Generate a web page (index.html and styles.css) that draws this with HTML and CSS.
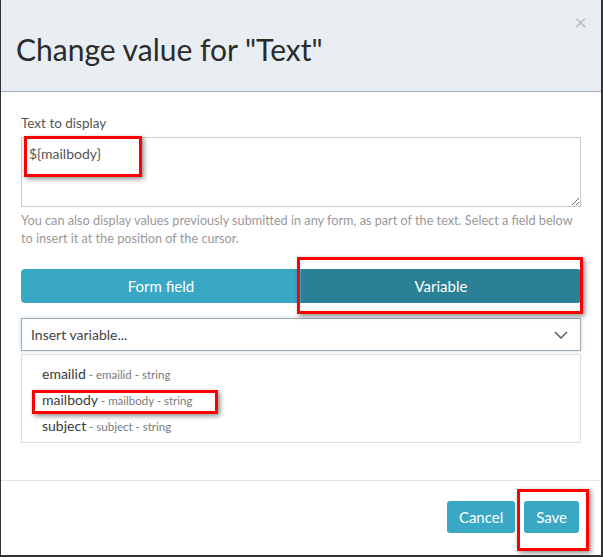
FILE: index.html
```html
<!DOCTYPE html>
<html lang="en">
<head>
<meta charset="utf-8">
<title>Change value</title>
<link rel="stylesheet" href="styles.css">
</head>
<body>
<div class="modal">
  <div class="modal-header">
    <h2 class="title">Change value for "Text"</h2>
    <span class="close">&times;</span>
  </div>
  <div class="modal-body">
    <label class="label">Text to display</label>
    <textarea class="textarea">${mailbody}</textarea>
    <p class="help">You can also display values previously submitted in any form, as part of the text. Select a field below to insert it at the position of the cursor.</p>
    <div class="tabs">
      <div class="tab">Form field</div>
      <div class="tab active">Variable</div>
    </div>
    <div class="select">
      <span>Insert variable...</span>
      <svg class="chevron" width="14" height="8" viewBox="0 0 14 8"><polyline points="1,1 7,7 13,1" fill="none" stroke="#555" stroke-width="1.4"/></svg>
    </div>
    <ul class="options">
      <li><span class="main">emailid</span><span class="sub"> - emailid - string</span></li>
      <li><span class="main">mailbody</span><span class="sub"> - mailbody - string</span></li>
      <li><span class="main">subject</span><span class="sub"> - subject - string</span></li>
    </ul>
  </div>
  <div class="modal-footer">
    <button class="btn">Cancel</button>
    <button class="btn">Save</button>
  </div>
  <span class="mark mark-1"></span>
  <span class="mark mark-2"></span>
  <span class="mark mark-3"></span>
  <span class="mark mark-4"></span>
</div>
</body>
</html>
```
FILE: styles.css
```css
html, body {
  margin: 0;
  padding: 0;
  background: #fff;
}
body {
  font-family: Lato, "Open Sans", sans-serif;
  color: #333;
}
.modal {
  position: relative;
  width: 600px;
  height: 555px;
  border-left: 1px solid #333;
  border-right: 2px solid #333;
  border-bottom: 2px solid #333;
  background: #fff;
  display: flex;
  flex-direction: column;
}
.modal-header {
  position: relative;
  height: 91px;
  background: #e9eef2;
  border-bottom: 1px solid #a3adb8;
  padding-left: 15px;
  box-sizing: content-box;
}
.title {
  margin: 0;
  padding-top: 31px;
  font-size: 30px;
  line-height: 36px;
  font-weight: 400;
  color: #2b2b2b;
}
.close {
  position: absolute;
  top: 8px;
  right: 14px;
  font-size: 22px;
  line-height: 28px;
  color: #bdbdbd;
}
.modal-body {
  flex: 1;
  padding: 22px 20px 0;
  display: flex;
  flex-direction: column;
}
.label {
  display: block;
  font-size: 13.5px;
  line-height: 18px;
  color: #555;
}
.textarea {
  display: block;
  margin-top: 5px;
  height: 70px;
  width: 100%;
  box-sizing: border-box;
  border: 1px solid #ccc;
  padding: 7px 7px 5px;
  font-family: Lato, sans-serif;
  font-size: 14px;
  line-height: 18px;
  color: #555;
  resize: vertical;
}
.help {
  margin: 4px 0 0;
  font-size: 12.7px;
  line-height: 18px;
  color: #999;
}
.tabs {
  display: flex;
  margin-top: 22px;
  height: 34px;
  border-radius: 4px;
  overflow: hidden;
}
.tab {
  flex: 1;
  display: flex;
  align-items: center;
  justify-content: center;
  background: #38a8c5;
  color: #fff;
  font-size: 15px;
}
.tab.active {
  background: #2a8196;
}
.select {
  margin-top: 15px;
  height: 33px;
  box-sizing: border-box;
  border: 1px solid #a8a8a8;
  box-shadow: 0 0 4px rgba(102, 175, 233, 0.45);
  display: flex;
  align-items: center;
  justify-content: space-between;
  padding: 0 12px 0 9px;
  font-size: 14px;
  color: #444;
}
.chevron {
  display: block;
}
.options {
  list-style: none;
  margin: 3px 0 0;
  padding: 5px 20px 0;
  height: 89px;
  box-sizing: border-box;
  border: 1px solid #ddd;
}
.options li {
  height: 26px;
  line-height: 26px;
}
.main {
  font-size: 14px;
  color: #3a3a3a;
}
.sub {
  font-size: 11.5px;
  color: #7a7a7a;
}
.modal-footer {
  height: 54px;
  border-top: 1px solid #e5e5e5;
  padding: 20px 22px 0 0;
  display: flex;
  justify-content: flex-end;
  align-items: flex-start;
  gap: 9px;
}
.btn {
  height: 32px;
  padding: 0 12px;
  border: 0;
  border-radius: 3px;
  background: #38a8c5;
  color: #fff;
  font-family: Lato, sans-serif;
  font-size: 15px;
}
.mark {
  position: absolute;
  border: 3px solid #ff0000;
  box-shadow: 2px 2px 5px rgba(0, 0, 0, 0.45);
  box-sizing: border-box;
}
.mark-1 { left: 23px; top: 136px; width: 118px; height: 41px; }
.mark-2 { left: 296px; top: 257px; width: 286px; height: 57px; }
.mark-3 { left: 31px; top: 390px; width: 186px; height: 24px; }
.mark-4 { left: 516px; top: 489px; width: 72px; height: 62px; }
```
